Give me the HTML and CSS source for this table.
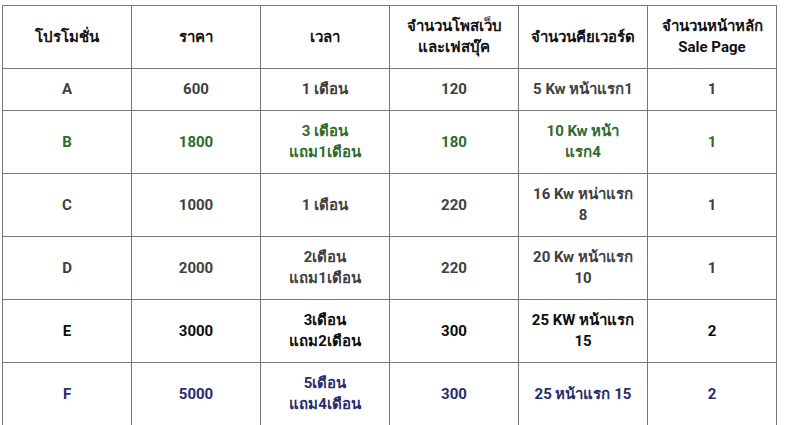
FILE: index.html
```html
<!DOCTYPE html>
<html lang="th">
<head>
<meta charset="utf-8">
<title>โปรโมชั่น</title>
<link rel="stylesheet" href="styles.css">
</head>
<body>
<div class="wrap">
<table class="promo">
  <colgroup>
    <col class="c"><col class="c"><col class="c"><col class="c"><col class="c"><col class="c">
  </colgroup>
  <thead>
    <tr class="head">
      <th>โปรโมชั่น</th>
      <th>ราคา</th>
      <th>เวลา</th>
      <th>จำนวนโพสเว็บ<br>และเฟสบุ๊ค</th>
      <th>จำนวนคียเวอร์ด</th>
      <th>จำนวนหน้าหลัก<br>Sale Page</th>
    </tr>
  </thead>
  <tbody>
    <tr class="gray">
      <td>A</td><td>600</td><td>1 เดือน</td><td>120</td><td>5 Kw หน้าแรก1</td><td>1</td>
    </tr>
    <tr class="green">
      <td>B</td><td>1800</td><td>3 เดือน<br>แถม1เดือน</td><td>180</td><td>10 Kw หน้า<br>แรก4</td><td>1</td>
    </tr>
    <tr class="gray">
      <td>C</td><td>1000</td><td>1 เดือน</td><td>220</td><td>16 Kw หน่าแรก<br>8</td><td>1</td>
    </tr>
    <tr class="gray">
      <td>D</td><td>2000</td><td>2เดือน<br>แถม1เดือน</td><td>220</td><td>20 Kw หน้าแรก<br>10</td><td>1</td>
    </tr>
    <tr class="black">
      <td>E</td><td>3000</td><td>3เดือน<br>แถม2เดือน</td><td>300</td><td>25 KW หน้าแรก<br>15</td><td>2</td>
    </tr>
    <tr class="navy">
      <td>F</td><td>5000</td><td>5เดือน<br>แถม4เดือน</td><td>300</td><td>25 หน้าแรก 15</td><td>2</td>
    </tr>
  </tbody>
</table>
</div>
</body>
</html>
```
FILE: styles.css
```css
html, body {
  margin: 0;
  padding: 0;
  background: #ffffff;
}

.wrap {
  padding: 5px 0 0 2px;
}

.promo {
  border-collapse: collapse;
  table-layout: fixed;
  width: 775px;
  font-family: "Roboto", "Noto Sans", "DejaVu Sans", sans-serif;
  font-size: 15px;
  font-weight: 700;
  line-height: 21px;
}

.promo .c {
  width: 129px;
}

.promo th,
.promo td {
  border: 1px solid #777777;
  padding: 10px 4px;
  text-align: center;
  vertical-align: middle;
}

.promo th {
  color: #111111;
}

.gray td { color: #404040; }
.green td { color: #2d6a2d; }
.black td { color: #0d0d0d; }
.navy td { color: #272d6c; }
```
